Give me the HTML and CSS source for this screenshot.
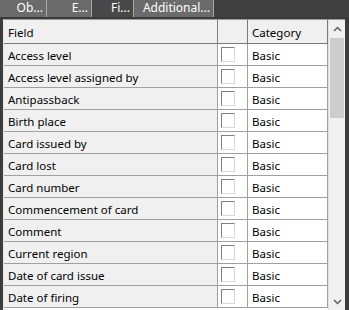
FILE: index.html
```html
<!DOCTYPE html>
<html lang="en">
<head>
    <meta charset="UTF-8">
    <title>Fields</title>
    <link rel="stylesheet" href="styles.css">
</head>
<body>
    <div class="tabs">
        <div class="tab tab-ob">Ob...</div>
        <div class="tab tab-e">E...</div>
        <div class="tab tab-fi active">Fi...</div>
        <div class="tab tab-add">Additional...</div>
    </div>
    <div class="panel">
        <div class="grid">
            <div class="head field">Field</div>
            <div class="head check"></div>
            <div class="head cat">Category</div>

            <div class="cell field">Access level</div><div class="cell check"><span class="box"></span></div><div class="cell cat">Basic</div>
            <div class="cell field">Access level assigned by</div><div class="cell check"><span class="box"></span></div><div class="cell cat">Basic</div>
            <div class="cell field">Antipassback</div><div class="cell check"><span class="box"></span></div><div class="cell cat">Basic</div>
            <div class="cell field">Birth place</div><div class="cell check"><span class="box"></span></div><div class="cell cat">Basic</div>
            <div class="cell field">Card issued by</div><div class="cell check"><span class="box"></span></div><div class="cell cat">Basic</div>
            <div class="cell field">Card lost</div><div class="cell check"><span class="box"></span></div><div class="cell cat">Basic</div>
            <div class="cell field">Card number</div><div class="cell check"><span class="box"></span></div><div class="cell cat">Basic</div>
            <div class="cell field">Commencement of card</div><div class="cell check"><span class="box"></span></div><div class="cell cat">Basic</div>
            <div class="cell field">Comment</div><div class="cell check"><span class="box"></span></div><div class="cell cat">Basic</div>
            <div class="cell field">Current region</div><div class="cell check"><span class="box"></span></div><div class="cell cat">Basic</div>
            <div class="cell field">Date of card issue</div><div class="cell check"><span class="box"></span></div><div class="cell cat">Basic</div>
            <div class="cell field">Date of firing</div><div class="cell check"><span class="box"></span></div><div class="cell cat">Basic</div>
        </div>
        <div class="scrollbar">
            <div class="arrow">
                <svg width="9" height="6" viewBox="0 0 9 6"><path d="M1 5 L4.5 1.5 L8 5" fill="none" stroke="#606060" stroke-width="1.5"/></svg>
            </div>
            <div class="track"><div class="thumb"></div></div>
            <div class="arrow">
                <svg width="9" height="6" viewBox="0 0 9 6"><path d="M1 1 L4.5 4.5 L8 1" fill="none" stroke="#606060" stroke-width="1.5"/></svg>
            </div>
        </div>
    </div>
</body>
</html>
```

FILE: styles.css
```css
body {
    margin: 0;
    width: 349px;
    height: 310px;
    overflow: hidden;
    background-color: #3c3c3c;
    font-family: "Noto Sans", Arial, sans-serif;
    font-size: 11.5px;
}
.tabs {
    display: flex;
    height: 17px;
    background-color: #404040;
    border-bottom: 2px solid #3a3a3a;
}
.tab {
    color: #ffffff;
    background-color: #6b6b6b;
    border-right: 1px solid #a8a8a8;
    text-align: right;
    padding-right: 3px;
    line-height: 16px;
    font-size: 12px;
    box-sizing: border-box;
}
.tab.active {
    background-color: #484848;
}
.tab-ob { width: 47px; }
.tab-e { width: 45px; }
.tab-fi { width: 42px; }
.tab-add { width: 80px; }
.panel {
    display: flex;
    margin-left: 3px;
    margin-right: 4px;
    height: 290px;
    background-color: #ffffff;
    border-left: 1px solid #e8e8e8;
    border-top: 1px solid #9a9a9a;
}
.grid {
    flex: 1;
    display: grid;
    grid-template-columns: 214px 30px 80px;
    grid-template-rows: 24px;
    grid-auto-rows: 22px;
    align-content: start;
    overflow: hidden;
}
.head, .cell {
    box-sizing: border-box;
    padding: 2px 0 0 4px;
    line-height: 19px;
    color: #000000;
    white-space: nowrap;
    overflow: hidden;
    border-right: 1px solid #a0a0a0;
    border-bottom: 1px solid #a0a0a0;
}
.head {
    padding-top: 3px;
    background-color: #f0f0f0;
    border-color: #7a7a7a;
}
.cell.field {
    background-color: #f0f0f0;
}
.cell.check {
    padding: 3px 0 0 3px;
}
.box {
    display: block;
    width: 14px;
    height: 15px;
    box-sizing: border-box;
    background-color: #ffffff;
    border-top: 1px solid #808080;
    border-left: 1px solid #808080;
    border-right: 1px solid #d8d8d8;
    border-bottom: 1px solid #d8d8d8;
}
.scrollbar {
    width: 16px;
    display: flex;
    flex-direction: column;
    background-color: #f0f0f0;
    border-left: 1px solid #e0e0e0;
}
.arrow {
    height: 17px;
    display: flex;
    justify-content: center;
    align-items: center;
}
.track {
    flex: 1;
}
.thumb {
    height: 80px;
    margin: 1px 1px 0 1px;
    background-color: #cdcdcd;
}
```
